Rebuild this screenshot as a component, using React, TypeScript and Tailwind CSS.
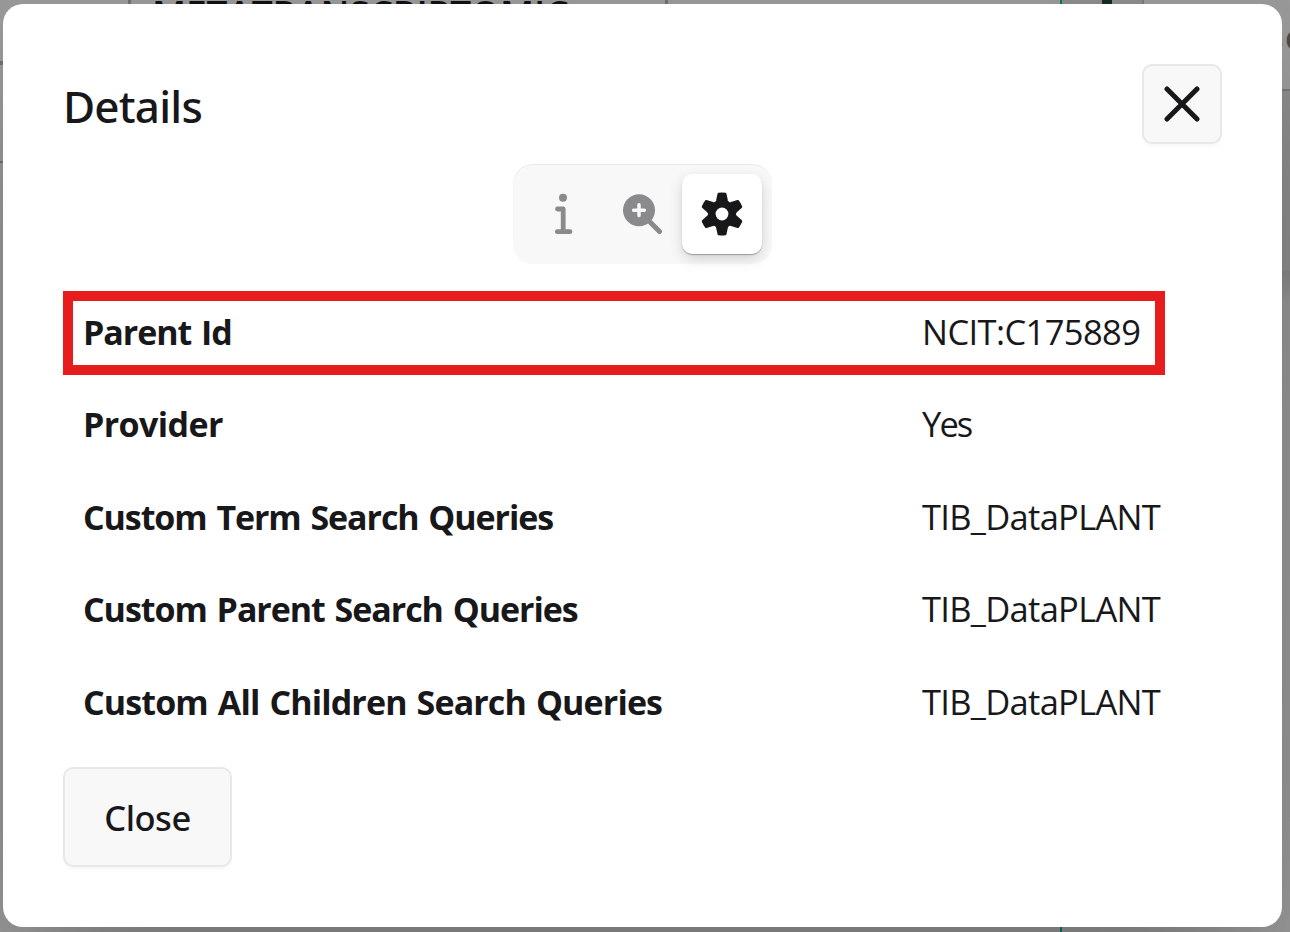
import React from "react";

type Row = { label: string; value: string; labelClass: string; valueClass: string };

const rows: Row[] = [
  { label: "Provider", value: "Yes", labelClass: "tracking-[-0.6px]", valueClass: "tracking-[-1.9px]" },
  { label: "Custom Term Search Queries", value: "TIB_DataPLANT", labelClass: "tracking-[-1.08px]", valueClass: "tracking-[-0.7px]" },
  { label: "Custom Parent Search Queries", value: "TIB_DataPLANT", labelClass: "tracking-[-1.05px]", valueClass: "tracking-[-0.7px]" },
  { label: "Custom All Children Search Queries", value: "TIB_DataPLANT", labelClass: "tracking-[-0.87px]", valueClass: "tracking-[-0.7px]" },
];

function InfoIcon() {
  return (
    <svg width="40" height="44" viewBox="0 0 40 44" fill="none" stroke="currentColor">
      <circle cx="21" cy="5.7" r="4" fill="currentColor" stroke="none" />
      <path d="M15.8 17H21.5V39.7M15.6 39.7H28.3" transform="translate(-0.3 0)" strokeWidth="4.8" strokeLinecap="round" strokeLinejoin="round" />
    </svg>
  );
}

function ZoomInIcon() {
  return (
    <svg width="40" height="44" viewBox="0 0 40 44" fill="none" stroke="currentColor" strokeLinecap="round">
      <circle cx="17" cy="18.2" r="16" fill="currentColor" stroke="none" />
      <path d="M27 29L37.5 39.5" strokeWidth="5" />
      <path d="M17 12.8V23.6M11.6 18.2H22.4" stroke="#f8f8f8" strokeWidth="3.5" />
    </svg>
  );
}

function GearIcon() {
  return (
    <svg width="44" height="44" viewBox="-22 -22 44 44" fill="none">
      <g fill="currentColor" stroke="currentColor" strokeWidth="2.4" strokeLinejoin="round">
        {[0, 60, 120, 180, 240, 300].map((a) => (
          <path key={a} transform={`rotate(${a})`} d="M-3.3-20.1Q0-20.5 3.3-20.1L4.7-13.5Q5.2-11.6 7-10.5L0 0L-7-10.5Q-5.2-11.6-4.7-13.5Z" />
        ))}
      </g>
      <circle r="6.4" fill="white" />
    </svg>
  );
}

function Backdrop() {
  return (
    <div className="flex h-full w-full overflow-hidden bg-[#999999]">
      <div className="flex w-[128px] shrink-0 flex-col">
        <div className="h-[61px]" />
        <div className="h-1 bg-[#707070]" />
        <div className="h-24" />
        <div className="h-0.5 bg-[#707070]" />
      </div>
      <div className="h-16 w-[540px] shrink-0 border-x-[3px] border-[#707070] pl-[21px]">
        <span className="-mt-[4px] block whitespace-nowrap text-[37px] font-semibold leading-[36px] tracking-[-0.1px] text-[#111113]">METATRANSCRIPTOMIC</span>
      </div>
      <div className="w-[394px] shrink-0 border-r-2 border-[#0d7566]" />
      <div className="h-16 w-[82px] shrink-0 border-r-2 border-[#7b7b7b] bg-[#8c8c8c] pl-10">
        <div className="h-1 w-2.5 bg-[#142c27]" />
      </div>
      <div className="flex flex-1 flex-col">
        <div className="h-[91px] border-b-2 border-[#777777] pl-[123px] pt-[18px]">
          <span className="block whitespace-nowrap text-[34px] font-semibold leading-[38px] tracking-[1.5px] text-[#4b4b4b]">so</span>
        </div>
        <div className="h-[180px] bg-[#8c8c8c]" />
        <div className="flex-1 bg-gradient-to-b from-[#858585] via-[#949494] via-5% to-[#999999]" />
      </div>
    </div>
  );
}

export default function App() {
  return (
    <div className="relative h-[932px] w-[1290px] overflow-hidden text-[#18181b] [font-family:'Open_Sans','Noto_Sans',sans-serif]">
      <Backdrop />
      <section className="absolute left-[3px] top-1 flex h-[923px] w-[1279px] flex-col rounded-[20px] bg-white px-[60px] pt-[60px] shadow-[0_62px_125px_-30px_rgba(0,0,0,0.3)]">
        <header className="flex h-20 shrink-0 items-center justify-between">
          <h1 className="pt-[3px] text-[44px] font-medium leading-[60px] tracking-[-0.8px] [font-family:'Noto_Sans',sans-serif]">Details</h1>
          <button className="flex h-20 w-20 items-center justify-center rounded-[10px] border-2 border-[#e8e8e8] bg-[#f8f8f8] shadow-[0_5px_5px_-3px_rgba(0,0,0,0.04)]">
            <svg width="36" height="36" viewBox="0 0 36 36" fill="none" stroke="currentColor" strokeWidth="5" strokeLinecap="round">
              <path d="M3 3L33 33M33 3L3 33" />
            </svg>
          </button>
        </header>
        <nav className="ml-[450px] mt-5 flex h-[100px] w-[259px] shrink-0 items-center rounded-[20px] border-t border-[#e8e8e8] bg-[#f8f8f8] pb-px pl-[9px] text-[#8a8a8c]">
          <button className="flex h-20 w-20 items-center justify-center"><InfoIcon /></button>
          <button className="flex h-20 w-20 items-center justify-center"><ZoomInIcon /></button>
          <button className="flex h-20 w-20 items-center justify-center rounded-[10px] bg-white text-[#18181b] shadow-[0_1px_1px_rgba(0,0,0,0.3),0_5px_15px_-2px_rgba(0,0,0,0.2)]"><GearIcon /></button>
        </nav>
        <dl className="mt-[27px] text-[34.5px] leading-[48px]">
          <div className="flex h-[84px] w-[1102px] items-center border-[10px] border-[#e71c1c] pb-[2px] pl-[10px]">
            <dt className="w-[839px] text-[34px] font-bold tracking-[-1.05px] [word-spacing:2px]">Parent Id</dt>
            <dd className="whitespace-nowrap tracking-[-0.6px]">NCIT:C175889</dd>
          </div>
          <div className="pt-[3px]">
            {rows.map((row) => (
              <div key={row.label} className="flex h-[92.5px] items-center pl-[20px]">
                <dt className={`w-[839px] text-[34px] font-bold [word-spacing:2px] ${row.labelClass}`}>{row.label}</dt>
                <dd className={`whitespace-nowrap ${row.valueClass}`}>{row.value}</dd>
              </div>
            ))}
          </div>
        </dl>
        <button className="mt-[19px] h-[100px] w-[169px] shrink-0 rounded-[10px] border-2 border-[#e8e8e8] bg-[#f8f8f8] pt-[2px] text-[34.5px] font-medium tracking-[-0.5px] shadow-[0_5px_5px_-3px_rgba(0,0,0,0.04)] [font-family:'Noto_Sans',sans-serif]">Close</button>
      </section>
    </div>
  );
}
